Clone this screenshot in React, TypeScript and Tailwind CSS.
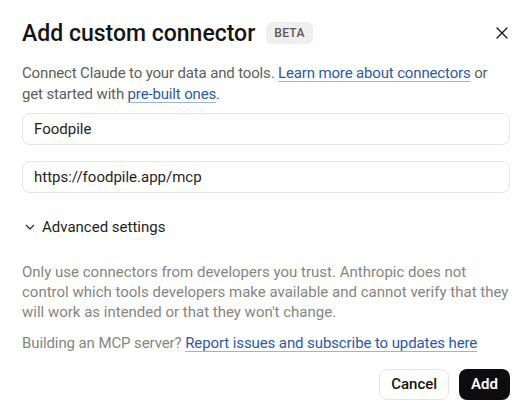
import React from "react";

export default function App() {
  const font = { fontFamily: "Roboto, 'Noto Sans', sans-serif" };
  const link = "text-[#2c5aa0] underline decoration-[#9fb3d6] underline-offset-[3px]";
  return (
    <div className="w-[532px] h-[417px] bg-white overflow-hidden whitespace-nowrap" style={font}>
      <div className="px-[22px] pt-[20px] flex flex-col">
        <div className="flex items-center h-[26px]">
          <h1 className="text-[23px] font-medium text-[#141413] leading-none">Add custom connector</h1>
          <span className="ml-[11px] h-[22px] px-[8px] flex items-center rounded-[6px] bg-[#f0efed] text-[12px] font-medium text-[#5a5955] tracking-[0.3px]">BETA</span>
          <button className="ml-auto mr-[-2px] w-[20px] h-[20px] flex items-center justify-center text-[#141413]">
            <svg width="12" height="12" viewBox="0 0 12 12" fill="none" stroke="currentColor" strokeWidth="1.3" strokeLinecap="round">
              <path d="M1 1 L11 11 M11 1 L1 11" />
            </svg>
          </button>
        </div>
        <p className="mt-[17px] text-[15px] leading-[21px] text-[#5e5d59] tracking-[-0.15px]">
          Connect Claude to your data and tools.{" "}
          <a className={link}>Learn more about connectors</a> or<br />
          get started with{" "}
          <a className={link}>pre-built ones</a>.
        </p>
        <div className="mt-[8px] h-[32px] rounded-[8px] border border-[#e6e5e1] flex items-center px-[11px] text-[15px] text-[#1f1e1d]">Foodpile</div>
        <div className="mt-[16px] h-[32px] rounded-[8px] border border-[#e6e5e1] flex items-center px-[11px] text-[15px] text-[#1f1e1d]">https://foodpile.app/mcp</div>
        <div className="mt-[23px] flex items-center h-[22px] text-[15px] text-[#1f1e1d]">
          <svg width="10" height="10" viewBox="0 0 10 10" fill="none" stroke="currentColor" strokeWidth="1.1" className="ml-[3px] mr-[7px]">
            <path d="M1 3 L5 7 L9 3" />
          </svg>
          Advanced settings
        </div>
        <p className="mt-[24px] text-[15px] leading-[20px] text-[#86857f]">
          Only use connectors from developers you trust. Anthropic does not<br />
          control which tools developers make available and cannot verify that they<br />
          will work as intended or that they won't change.
        </p>
        <p className="mt-[11px] text-[15px] leading-[21px] text-[#86857f] tracking-[-0.1px]">
          Building an MCP server?{" "}
          <a className={link}>Report issues and subscribe to updates here</a>
        </p>
        <div className="mt-[15px] flex justify-end gap-[10px]">
          <button className="h-[31px] px-[11px] rounded-[8px] border border-[#e6e5e1] bg-white text-[15px] font-medium text-[#141413]">Cancel</button>
          <button className="h-[31px] px-[12px] rounded-[8px] bg-[#0d0d0d] text-[15px] font-semibold text-white">Add</button>
        </div>
      </div>
    </div>
  );
}
